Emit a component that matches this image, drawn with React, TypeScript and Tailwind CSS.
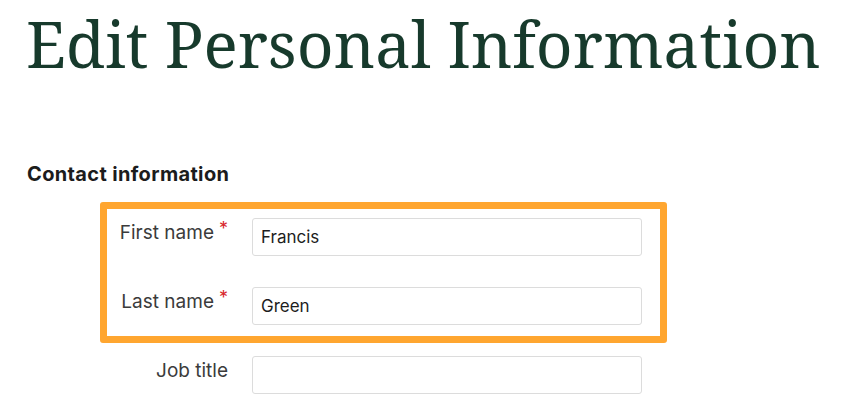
import React from "react"

type Field = { label: string; value: string; required?: boolean }

const highlighted: Field[] = [
  { label: "First name", value: "Francis", required: true },
  { label: "Last name", value: "Green", required: true },
]

const FieldRow = ({ field }: { field: Field }) => (
  <div className="flex items-start">
    <label className="w-[121px] shrink-0 pt-[3px] text-right text-[19px] leading-6 text-[#3b3b3b]">
      {field.label}
      {field.required && <span className="relative -top-[4px] ml-[5px] text-[18px] text-[#d8262c]">*</span>}
    </label>
    <input
      readOnly
      defaultValue={field.value}
      className="ml-[24px] h-[38px] w-[390px] rounded-[3px] border border-[#dcdcdc] bg-white px-[8px] text-[17px] text-[#1d1d1d] outline-none"
    />
  </div>
)

export default function App() {
  return (
    <div className="min-h-screen bg-white font-['Inter','Liberation_Sans',sans-serif]">
      {/* Page title */}
      <h1 className="pl-[26px] pt-[12px] font-['Noto_Serif',serif] text-[64px] leading-none text-[#173a2c] [font-stretch:condensed]">
        Edit Personal Information
      </h1>

      {/* Section heading */}
      <h2 className="mt-[88px] pl-[27px] text-[20px] font-bold leading-none tracking-[0.35px] text-[#1c1c1c]">
        Contact information
      </h2>

      <div className="ml-[100px] mt-[18px] w-[567px]">
        {/* Highlighted rows */}
        <div className="flex flex-col gap-[31px] rounded-[3px] border-[7px] border-[#ffa630] pb-[11px] pt-[9px]">
          {highlighted.map((f) => (
            <FieldRow key={f.label} field={f} />
          ))}
        </div>

        <div className="mt-[13px] pl-[7px]">
          <FieldRow field={{ label: "Job title", value: "" }} />
        </div>
      </div>
    </div>
  )
}
